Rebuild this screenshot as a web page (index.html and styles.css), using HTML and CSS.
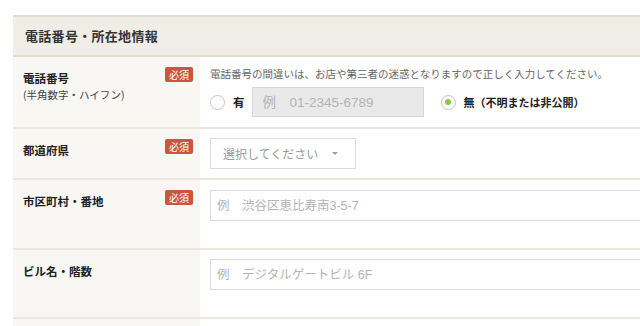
FILE: index.html
```html
<!DOCTYPE html>
<html lang="ja">
<head>
  <meta charset="UTF-8">
  <title>電話番号・所在地情報</title>
  <link rel="stylesheet" href="styles.css">
</head>
<body>

  <div class="section">
    <h2 class="section-title">電話番号・所在地情報</h2>

    <div class="row">
      <div class="label">
        <div>
          <div class="label-text">電話番号</div>
          <div class="label-sub">(半角数字・ハイフン)</div>
        </div>
        <span class="badge">必須</span>
      </div>
      <div class="value">
        <p class="help">電話番号の間違いは、お店や第三者の迷惑となりますので正しく入力してください。</p>
        <div class="tel-line">
          <label class="radio"><span class="circle"></span>有</label>
          <input class="field field-tel" type="text" placeholder="例　01-2345-6789" disabled>
          <label class="radio radio-off"><span class="circle checked"></span>無（不明または非公開）</label>
        </div>
      </div>
    </div>

    <div class="row">
      <div class="label">
        <div class="label-text">都道府県</div>
        <span class="badge">必須</span>
      </div>
      <div class="value value-short">
        <div class="select">選択してください<span class="arrow"></span></div>
      </div>
    </div>

    <div class="row">
      <div class="label">
        <div class="label-text">市区町村・番地</div>
        <span class="badge">必須</span>
      </div>
      <div class="value value-tall">
        <input class="field" type="text" placeholder="例　渋谷区恵比寿南3-5-7">
      </div>
    </div>

    <div class="row">
      <div class="label">
        <div class="label-text">ビル名・階数</div>
      </div>
      <div class="value value-tall value-last">
        <input class="field" type="text" placeholder="例　デジタルゲートビル 6F">
      </div>
    </div>

    <div class="row">
      <div class="label"></div>
      <div class="value value-tall"></div>
    </div>
  </div>

</body>
</html>
```

FILE: styles.css
```css
html, body {
  overflow: hidden;
}
body {
  margin: 0;
  background: #fff;
  font-family: "Noto Sans CJK JP", "Liberation Sans", sans-serif;
  color: #222;
}
.section {
  margin: 15px 0 0 13px;
  width: 700px;
}
.section-title {
  margin: 0;
  height: 38px;
  line-height: 38px;
  padding-left: 12px;
  background: #f0ede6;
  border-top: 2px solid #e2ddd2;
  border-bottom: 2px solid #e2ddd2;
  font-size: 13px;
  letter-spacing: 0.3px;
  font-weight: bold;
  color: #333;
}
.row {
  display: flex;
  border-bottom: 2px solid #ebe7df;
}
.label {
  width: 187px;
  flex-shrink: 0;
  box-sizing: border-box;
  padding: 11px 7px 0 10px;
  background: #f8f7f3;
  display: flex;
  justify-content: space-between;
  align-items: flex-start;
}
.label-text {
  font-size: 11.5px;
  font-weight: bold;
  line-height: 20px;
}
.label-sub {
  font-size: 10.5px;
  line-height: 14px;
  color: #444;
}
.badge {
  margin-top: -1px;
  width: 28px;
  height: 15px;
  line-height: 15px;
  text-align: center;
  background: #c9573d;
  color: #fff;
  font-size: 10px;
  border-radius: 2px;
}
.value {
  flex: 1;
  padding: 9px 10px 10px 10px;
}
.value-short {
  padding: 9px 10px 9px 10px;
}
.value-tall {
  padding: 10px 10px 27px 10px;
  min-height: 31px;
}
.value-last {
  padding-top: 9px;
}
.help {
  margin: 0 0 5px;
  font-size: 10.5px;
  line-height: 16px;
  color: #666;
}
.tel-line {
  display: flex;
  align-items: center;
}
.radio {
  display: flex;
  align-items: center;
  gap: 8px;
  font-size: 11.5px;
  font-weight: bold;
}
.radio-off {
  margin-left: 17px;
  font-size: 11px;
}
.circle {
  width: 13px;
  height: 13px;
  border: 1px solid #c4c4c4;
  border-radius: 50%;
  background: #fff;
  display: flex;
  align-items: center;
  justify-content: center;
}
.circle.checked::after {
  content: "";
  width: 6px;
  height: 6px;
  border-radius: 50%;
  background: #8dc63f;
}
.field {
  display: block;
  box-sizing: border-box;
  width: 100%;
  height: 31px;
  padding: 0 6px;
  border: 1px solid #dcdcdc;
  background: #fff;
  font-family: "Liberation Sans", "Noto Sans CJK JP", sans-serif;
  font-size: 12.5px;
  outline: none;
}
.field::placeholder {
  color: #b4b4b4;
}
.field-tel {
  width: 172px;
  height: 30px;
  margin-left: 7px;
  padding-left: 10px;
  background: #e9e9e9;
  border-color: #d6d6d6;
  font-size: 13.5px;
}
.select {
  box-sizing: border-box;
  width: 146px;
  height: 31px;
  line-height: 29px;
  padding-left: 12px;
  border: 1px solid #dcdcdc;
  font-size: 12px;
  color: #9a9a9a;
  display: flex;
  align-items: center;
}
.arrow {
  margin-left: 14px;
  width: 0;
  height: 0;
  border-left: 3px solid transparent;
  border-right: 3px solid transparent;
  border-top: 3px solid #a0a0a0;
}
```
